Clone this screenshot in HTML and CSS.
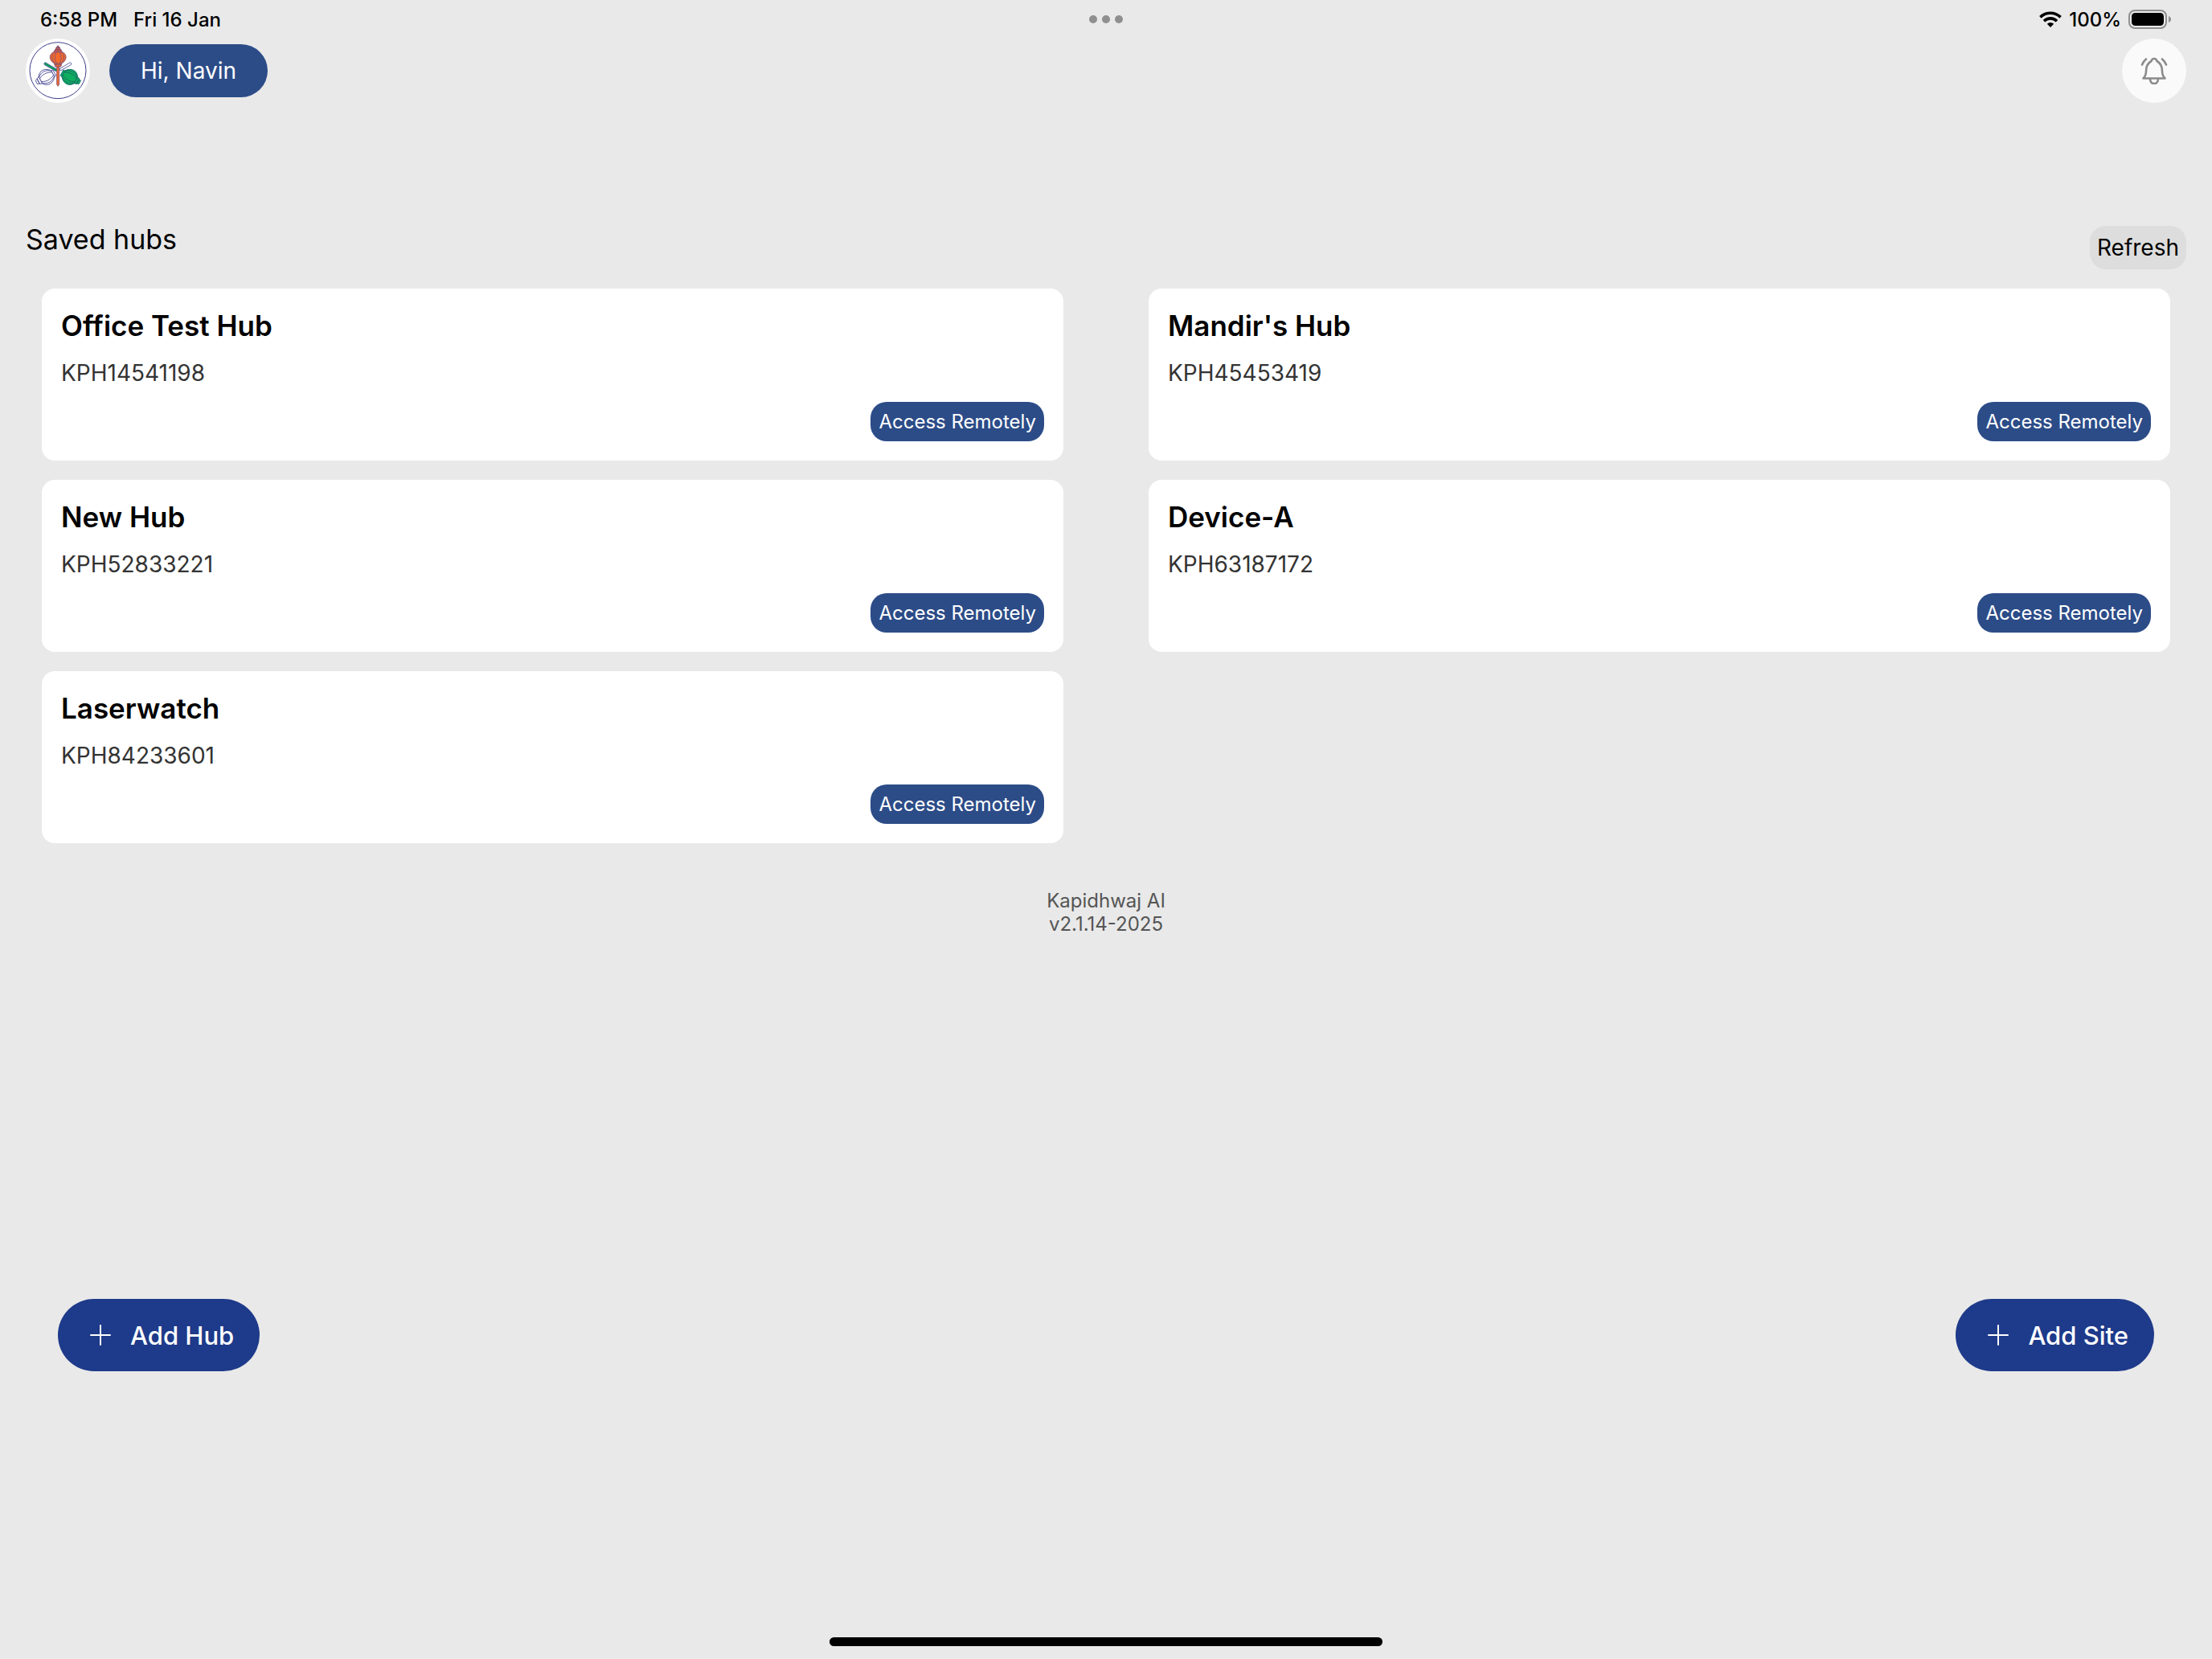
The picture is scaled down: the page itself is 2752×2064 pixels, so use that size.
FILE: index.html
```html
<!DOCTYPE html>
<html lang="en">
<head>
<meta charset="utf-8">
<meta name="viewport" content="width=device-width, initial-scale=1">
<title>Kapidhwaj AI</title>
<link rel="stylesheet" href="styles.css">
</head>
<body>
<div class="screen">
  <div class="status">
    <div class="status-side">
      <span>6:58 PM</span>
      <span>Fri 16 Jan</span>
    </div>
    <div class="dots"><i></i><i></i><i></i></div>
    <div class="status-side status-right">
      <svg class="wifi" viewBox="0 0 28 20" aria-hidden="true">
        <g fill="none" stroke="#000" stroke-width="3.6">
          <path d="M1.4 7.4a18 18 0 0 1 25.2 0"/>
          <path d="M6 12.2a11.4 11.4 0 0 1 16 0"/>
        </g>
        <path d="M14 20l-4.200-4.300a6 6 0 0 1 8.400 0z"/>
      </svg>
      <span>100%</span>
      <svg class="battery" viewBox="0 0 54 24" aria-hidden="true">
        <rect x="1" y="1" width="46" height="22" rx="7" fill="none" stroke="#8f8f8f" stroke-width="2"/>
        <rect x="4" y="4" width="40" height="16" rx="4.500"/>
        <path d="M50 8c4 1.500 4 6.500 0 8z" fill="#8f8f8f"/>
      </svg>
    </div>
  </div>

  <header class="header">
    <div class="header-user">
      <svg class="logo" viewBox="6 12 240 240" role="img" aria-label="Kapidhwaj">
        <circle cx="126" cy="132" r="120" fill="#fff"/>
        <circle cx="126" cy="131" r="105" fill="none" stroke="#3f3f8c" stroke-width="3"/>
        <g stroke="#4b4a94" stroke-width="2.500">
          <path d="M74 105l5-4 44 26-4 7-42-24z" fill="#0aa55c"/>
          <path d="M177 105l-5-4-40 24 3 7 40-22z" fill="#fff"/>
          <g transform="translate(84 155) rotate(-118)" fill="#fff">
            <path d="M-12 26h24v7h-24z"/>
            <path d="M-13 26C-34 10-34-14-14-26h28C34-14 34 10 13 26z"/>
            <path d="M-14-26h28l-3-9h-22zM-10-35h20l-3-8H-7z"/>
            <path d="M-6 26C-16 8-16-10-6-26M6 26C16 8 16-10 6-26M-12 26C-26 8-26-10-12-26M12 26C26 8 26-10 12-26" fill="none"/>
          </g>
          <g transform="translate(170 155) rotate(118)" fill="#0fae5f" stroke="#176b68">
            <path d="M-12 26h24v7h-24z"/>
            <path d="M-13 26C-34 10-34-14-14-26h28C34-14 34 10 13 26z"/>
            <path d="M-14-26h28l-3-9h-22zM-10-35h20l-3-8H-7z"/>
            <path d="M-6 26C-16 8-16-10-6-26M6 26C16 8 16-10 6-26M-12 26C-26 8-26-10-12-26M12 26C26 8 26-10 12-26" fill="none"/>
          </g>
          <g fill="#f26a2c" stroke="#7d4f78">
            <path d="M122 117h9v66l-4.500 7-4.500-7z"/>
            <path d="M113 105h27l-3 12h-21z"/>
            <path d="M113 105C90 92 93 68 111 62h31c18 6 21 30-2 43z"/>
            <path d="M111 62l4-9h23l4 9zM117 53l3-8h13l3 8zM121 45l5.500-7 5.500 7z" fill="#c75a4c"/>
            <path d="M121 105c-8-14-8-30 0-43M132 105c8-14 8-30 0-43M114 105c-14-16-11-33-1-43M139 105c14-16 11-33 1-43M113 110h27" fill="none"/>
          </g>
        </g>
      </svg>
      <button class="greeting" type="button">Hi, Navin</button>
    </div>
    <button class="bell" type="button" aria-label="Notifications">
      <svg viewBox="0 0 34 34" fill="none" stroke="#8b8b8b" stroke-width="2.600" stroke-linecap="round" stroke-linejoin="round" aria-hidden="true">
        <path d="M3.500 26.500h27c-2.500-2.500-3.500-4-3.500-9 0-6-2-10-6.500-12.500C20 3 18.500 2 17 2s-3 1-3.500 3C9 7.500 7 11.500 7 17.500c0 5-1 6.500-3.500 9z"/>
        <path d="M12 27c0 3.500 2 6 5 6s5-2.500 5-6M2 9.500C3.200 6.500 4.800 4.300 7 2.500M32 9.500c-1.200-3-2.800-5.200-5-7"/>
      </svg>
    </button>
  </header>

  <main class="main">
    <div class="section-head">
      <h1 class="section-title">Saved hubs</h1>
      <button class="refresh" type="button">Refresh</button>
    </div>
    <div class="hubs">
      <article class="card">
        <h2 class="card-title">Office Test Hub</h2>
        <p class="card-id">KPH14541198</p>
        <button class="access" type="button">Access Remotely</button>
      </article>
      <article class="card">
        <h2 class="card-title">Mandir's Hub</h2>
        <p class="card-id">KPH45453419</p>
        <button class="access" type="button">Access Remotely</button>
      </article>
      <article class="card">
        <h2 class="card-title">New Hub</h2>
        <p class="card-id">KPH52833221</p>
        <button class="access" type="button">Access Remotely</button>
      </article>
      <article class="card">
        <h2 class="card-title">Device-A</h2>
        <p class="card-id">KPH63187172</p>
        <button class="access" type="button">Access Remotely</button>
      </article>
      <article class="card">
        <h2 class="card-title">Laserwatch</h2>
        <p class="card-id">KPH84233601</p>
        <button class="access" type="button">Access Remotely</button>
      </article>
    </div>
    <p class="version">Kapidhwaj AI<br>v2.1.14-2025</p>
  </main>

  <div class="actions">
    <button class="add" type="button">
      <svg class="plus" viewBox="0 0 26 26" aria-hidden="true"><path d="M13 1v24M1 13h24" stroke="#fff" stroke-width="2" stroke-linecap="round"/></svg>
      Add Hub
    </button>
    <button class="add" type="button">
      <svg class="plus" viewBox="0 0 26 26" aria-hidden="true"><path d="M13 1v24M1 13h24" stroke="#fff" stroke-width="2" stroke-linecap="round"/></svg>
      Add Site
    </button>
  </div>
  <div class="home-bar"></div>
</div>
</body>
</html>
```
FILE: styles.css
```css
* {
  box-sizing: border-box;
}

body {
  margin: 0;
  background: #e9e9e9;
  color: #000;
  font-family: Inter, "Liberation Sans", sans-serif;
}

h1,
h2,
p {
  margin: 0;
}

button {
  border: 0;
  padding: 0;
  font-family: inherit;
  cursor: pointer;
}

svg {
  display: block;
}

.screen {
  display: flex;
  flex-direction: column;
  min-height: 100vh;
}

.status {
  display: grid;
  grid-template-columns: 1fr auto 1fr;
  align-items: center;
  height: 48px;
  padding: 0 50px;
  font-size: 24px;
  font-weight: 500;
}

.status-side {
  display: flex;
  align-items: center;
  gap: 20px;
}

.status-right {
  justify-content: flex-end;
  gap: 9px;
}

.dots {
  display: flex;
  gap: 6px;
}

.dots i {
  width: 10px;
  height: 10px;
  border-radius: 50%;
  background: #8f8f8f;
}

.wifi {
  width: 28px;
  height: 20px;
}

.battery {
  width: 54px;
  height: 24px;
}

.header {
  display: flex;
  justify-content: space-between;
  padding: 0 32px;
}

.header-user {
  display: flex;
  align-items: center;
  gap: 24px;
}

.logo {
  width: 80px;
  height: 80px;
}

.greeting {
  height: 66px;
  padding: 0 39px;
  border-radius: 33px;
  background: #2c4c88;
  color: #fff;
  font-size: 28px;
}

.bell {
  display: grid;
  place-items: center;
  width: 80px;
  height: 80px;
  border-radius: 50%;
  background: #fafafa;
}

.bell svg {
  width: 34px;
  height: 34px;
}

.main {
  padding: 153px 32px 0;
}

.section-head {
  display: flex;
  justify-content: space-between;
  align-items: flex-start;
}

.section-title {
  font-size: 34px;
  font-weight: 400;
  line-height: 34px;
}

.refresh {
  height: 54px;
  padding: 0 9px;
  border-radius: 20px;
  background: #dddddd;
  color: #000;
  font-size: 28px;
}

.hubs {
  display: grid;
  grid-template-columns: 1fr 1fr;
  gap: 24px 106px;
  padding: 24px 20px 0;
}

.card {
  display: flex;
  flex-direction: column;
  padding: 24px;
  border-radius: 16px;
  background: #fff;
}

.card-title {
  font-size: 35px;
  font-weight: 600;
  line-height: 44px;
}

.card-id {
  margin-top: 17px;
  color: #333;
  font-size: 28px;
  line-height: 40px;
}

.access {
  align-self: flex-end;
  height: 49px;
  margin-top: 16px;
  padding: 0 10px;
  border-radius: 20px;
  background: #2c4c88;
  color: #fff;
  font-size: 24px;
}

.version {
  margin-top: 57px;
  color: #555;
  font-size: 24px;
  line-height: 29px;
  text-align: center;
}

.actions {
  display: flex;
  justify-content: space-between;
  margin-top: auto;
  padding: 48px 72px 331px;
}

.add {
  display: flex;
  align-items: center;
  gap: 24px;
  height: 90px;
  padding: 0 32px 0 40px;
  border-radius: 45px;
  background: #1e3a8a;
  color: #fff;
  font-size: 31px;
  font-weight: 500;
}

.plus {
  width: 26px;
  height: 26px;
}

.home-bar {
  align-self: center;
  width: 25%;
  height: 11px;
  margin-bottom: 16px;
  border-radius: 6px;
  background: #000;
}
```
